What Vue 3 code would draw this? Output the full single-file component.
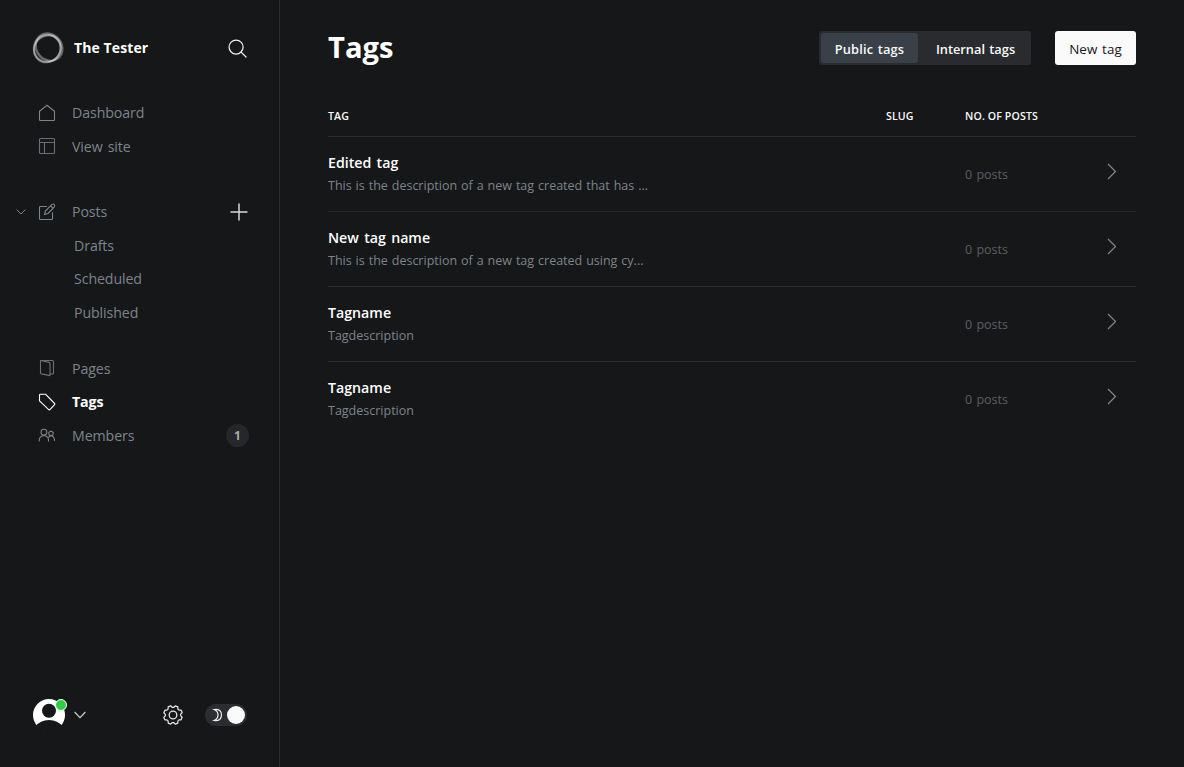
<script setup>
const postViews = ['Drafts', 'Scheduled', 'Published']
const tags = [
  { name: 'Edited tag', description: 'This is the description of a new tag created that has ...' },
  { name: 'New tag name', description: 'This is the description of a new tag created using cy...' },
  { name: 'Tagname', description: 'Tagdescription' },
  { name: 'Tagname', description: 'Tagdescription' },
]
</script>

<template>
  <div class="app">
    <aside class="sidebar">
      <header class="brand">
        <svg class="logo" viewBox="0 0 32 32" fill="none">
          <ellipse cx="15.3" cy="16.8" rx="14" ry="12.8" transform="rotate(-48 15.3 16.8)" stroke="#fff" stroke-opacity=".42" stroke-width="2" />
          <ellipse cx="17" cy="15.2" rx="14.3" ry="12.6" transform="rotate(50 17 15.2)" stroke="#fff" stroke-opacity=".36" stroke-width="2.4" />
          <circle cx="15.2" cy="16.2" r="13.4" stroke="#fff" stroke-opacity=".3" stroke-width="2" />
        </svg>
        <span class="site">The Tester</span>
        <svg class="search" viewBox="0 0 20 20" fill="none" stroke="#f0f0f0" stroke-width="1.3" stroke-linecap="round">
          <circle cx="8.5" cy="8.5" r="7.4" /><path d="M13.8 13.8 19 19" />
        </svg>
      </header>

      <nav class="nav">
        <a class="item">
          <svg class="icon" viewBox="0 0 18 18"><path d="M1.5 7.2 9 1.2l7.5 6v8.6q0 .7-.7.7H2.2q-.7 0-.7-.7z" /></svg>
          <span>Dashboard</span>
        </a>
        <a class="item">
          <svg class="icon dim" viewBox="0 0 18 18"><rect x="1.5" y="1.5" width="15" height="15" rx="1" /><path d="M1.5 5.5h15M6.5 5.5v11" /></svg>
          <span>View site</span>
        </a>
      </nav>

      <nav class="nav posts">
        <a class="item">
          <svg class="fold" viewBox="0 0 10 6"><path d="m.6.6 4.4 4.4L9.4.6" /></svg>
          <svg class="icon" viewBox="0 0 18 18"><path d="M8.5 3.5H2.2q-.7 0-.7.7v11.600q0 .7.7.7h11.600q.7 0 .7-.7V9.500" /><path d="m6.500 11.500.9-3.500L14 1.400q1.200-.8 2.200.2t.2 2.200L10 10.500zM12.600 2.800l2.500 2.500" /></svg>
          <span>Posts</span>
          <svg class="plus" viewBox="0 0 18 18"><path d="M9 .5v17M.5 9h17" /></svg>
        </a>
        <a v-for="view in postViews" :key="view" class="item sub"><span>{{ view }}</span></a>
      </nav>

      <nav class="nav pages">
        <a class="item">
          <svg class="icon dim" viewBox="0 0 18 18"><path d="M2.5 1.500h12q1 0 1 1v11.500q0 1-1 1h-2M2.500 1.500 11 3.400q1 .2 1 1.200v12L3.300 14.900q-.8-.2-.8-1z" /></svg>
          <span>Pages</span>
        </a>
        <a class="item active">
          <svg class="icon" viewBox="0 0 18 18"><path d="M1.500 2.200q0-.9.900-.9h5.300l8.900 9.200q.6.600 0 1.200l-4.700 4.900q-.6.600-1.200 0L1.500 7.900z" /></svg>
          <span>Tags</span>
        </a>
        <a class="item">
          <svg class="icon" viewBox="0 0 18 18"><circle cx="5.900" cy="6.200" r="2.900" /><circle cx="13" cy="7.400" r="2.200" /><path d="M1.200 15q0-5.200 4.700-5.200t4.700 5.200M10.700 11.200q.8-1.200 2.300-1.200 3.300 0 3.600 4.500" /></svg>
          <span>Members</span>
          <b class="count">1</b>
        </a>
      </nav>

      <footer class="footer">
        <svg class="avatar" viewBox="0 0 36 36">
          <defs><clipPath id="face"><circle cx="17" cy="18" r="16.5" /></clipPath></defs>
          <circle cx="17" cy="18" r="16" fill="#fff" />
          <g clip-path="url(#face)" fill="#151719"><circle cx="17" cy="13.800" r="7" /><path d="M3.500 29.500Q8 23 17 23t13.500 6.500v7h-27z" /></g>
          <circle cx="29" cy="8" r="5.500" fill="#30cf43" stroke="#fff" />
        </svg>
        <svg class="caret" viewBox="0 0 12 8"><path d="m.6 1 5.400 5.700L11.400 1" /></svg>
        <svg class="gear" viewBox="0 0 22 22">
          <circle cx="11" cy="11" r="4.200" />
          <path d="M8.600 2.700 9.500.8h3l.9 1.900q.8 1.200 2.200.6l1.700-.6 2 2-.6 1.700q-.6 1.500.7 2.200l1.800.9v3l-1.800.9q-1.300.7-.7 2.200l.6 1.700-2 2-1.700-.6q-1.400-.6-2.200.6l-.9 1.900h-3l-.9-1.900q-.8-1.200-2.200-.6l-1.700.6-2-2 .6-1.700q.6-1.500-.7-2.200L.8 12.500v-3l1.800-.9q1.300-.7.7-2.200l-.6-1.700 2-2 1.700.6q1.400.6 2.200-.6z" transform="rotate(22.5 11 11)" />
        </svg>
        <span class="toggle">
          <svg viewBox="0 0 10 14"><path d="M1.200 1.500Q8.500.8 8.500 7t-7.300 5.500Q5 10.800 5 7T1.200 1.500z" /></svg>
          <i></i>
        </span>
      </footer>
    </aside>

    <main class="main">
      <header class="top">
        <h1>Tags</h1>
        <div class="tabs"><button class="tab on">Public tags</button><button class="tab two">Internal tags</button></div>
        <button class="new">New tag</button>
      </header>
      <div class="row head"><span>Tag</span><span>Slug</span><span>No. of posts</span></div>
      <div v-for="(tag, i) in tags" :key="i" class="row">
        <div>
          <h3>{{ tag.name }}</h3>
          <p>{{ tag.description }}</p>
        </div>
        <span></span>
        <span class="posts-count">0 posts</span>
        <svg class="go" viewBox="0 0 10 17"><path d="m1 1 7.500 7.500L1 16" /></svg>
      </div>
    </main>
  </div>
</template>

<style>
body { background: #151719; }
</style>

<style scoped>
* { box-sizing: border-box; }
.app { display: flex; height: 767px; overflow: hidden; background: #151719; color: #fff; font-family: "Open Sans", "Noto Sans", sans-serif; }
svg { display: block; flex: none; fill: none; overflow: visible; }
.sidebar { width: 280px; flex: none; border-right: 1px solid #292b30; display: flex; flex-direction: column; }
.brand { display: flex; align-items: center; height: 32px; margin: 32px 32px 0; }
.logo { width: 32px; height: 32px; }
.site { margin-left: 10px; padding-bottom: 2px; font-size: 14px; letter-spacing: .1px; font-weight: 700; white-space: nowrap; }
.search { width: 19px; height: 19px; margin: 0 .5px 0 auto; }
.nav { padding: 0 31px 0 38px; margin-top: 32px; }
.posts { margin-top: 32px; }
.pages { margin-top: 22.400px; }
.item { display: flex; align-items: center; height: 33.5px; color: #7d848c; font-size: 14.2px; letter-spacing: -.1px; word-spacing: 1.5px; position: relative; white-space: nowrap; }
.icon { width: 18px; height: 18px; margin-right: 16px; stroke: #7d848c; stroke-width: 1.1; stroke-linejoin: round; stroke-linecap: round; }
.icon.dim { stroke: #6b6e75; }
.sub { padding-left: 36px; }
.fold { width: 10px; height: 6px; position: absolute; left: -22px; stroke: #7d848c; }
.plus { width: 18px; height: 18px; margin-left: auto; stroke: #d8d8d8; stroke-width: 1.5; }
.active { color: #fff; font-weight: 700; }
.active .icon { stroke: #fff; }
.count { width: 23px; height: 23px; border-radius: 50%; margin: 0 -1px 0 auto; background: #25272b; color: #a9adb3; font-size: 12px; line-height: 24px; text-align: center; font-weight: 700; }
.footer { display: flex; align-items: center; height: 36px; margin: auto 32px 34px; }
.avatar { width: 36px; height: 36px; }
.caret { width: 12px; height: 8px; margin-left: 6px; stroke: #d5d5d5; stroke-width: 1.1; }
.gear { width: 20px; height: 20px; margin-left: 77px; stroke: #e5e5e5; stroke-width: 1.4; stroke-linejoin: round; }
.toggle { width: 42px; height: 22px; border-radius: 11px; background: #2b2d31; margin-left: 22px; display: flex; align-items: center; padding: 0 2px 0 7.5px; justify-content: space-between; }
.toggle svg { width: 10px; height: 14px; stroke: #eee; stroke-width: 1.2; }
.toggle i { width: 18px; height: 18px; border-radius: 50%; background: #fafafa; }
.main { flex: 1; padding: 0 48px; }
.top { display: flex; height: 34px; margin-top: 31px; align-items: center; }
h1 { margin: 0 auto 2px 0; font-size: 29.2px; line-height: 34px; font-weight: 700; }
button { border: 0; padding: 0; font-family: inherit; white-space: nowrap; }
.tabs { display: flex; width: 212px; height: 34px; padding: 2px; background: #292b2e; border-radius: 3px; }
.tab { width: 97px; height: 30px; padding-top: 2px; border-radius: 3px; background: transparent; color: #fafafa; font-size: 12.8px; letter-spacing: .17px; word-spacing: 1px; font-weight: 600; }
.two { width: 111px; padding-left: 4px; letter-spacing: 0; }
.on { background: #394047; }
.new { width: 81px; height: 34px; padding-top: 2px; margin-left: 24px; border-radius: 3px; background: #fafafa; color: #151719; font-size: 13.4px; letter-spacing: .1px; word-spacing: 1px; }
.row { display: grid; grid-template-columns: 558px 79px 142px 1fr; height: 75px; border-top: 1px solid #292b30; }
.head { height: 41px; margin-top: 30px; border: 0; font-size: 10.6px; line-height: 42px; letter-spacing: .12px; font-weight: 600; text-transform: uppercase; color: #fafafa; }
h3 { margin: 15px 0 0; font-size: 14.2px; word-spacing: 1.6px; line-height: 22px; font-weight: 600; width: max-content; }
p { margin: 1px 0 0; font-size: 12.5px; word-spacing: .7px; line-height: 22px; color: #7d848c; width: max-content; }
.posts-count { font-size: 12.5px; word-spacing: 1px; line-height: 75px; color: #5a5f65; width: max-content; }
.go { width: 10px; height: 17px; margin: 26px 0 0 -.5px; stroke: #84878c; stroke-width: 1.2; }
</style>
